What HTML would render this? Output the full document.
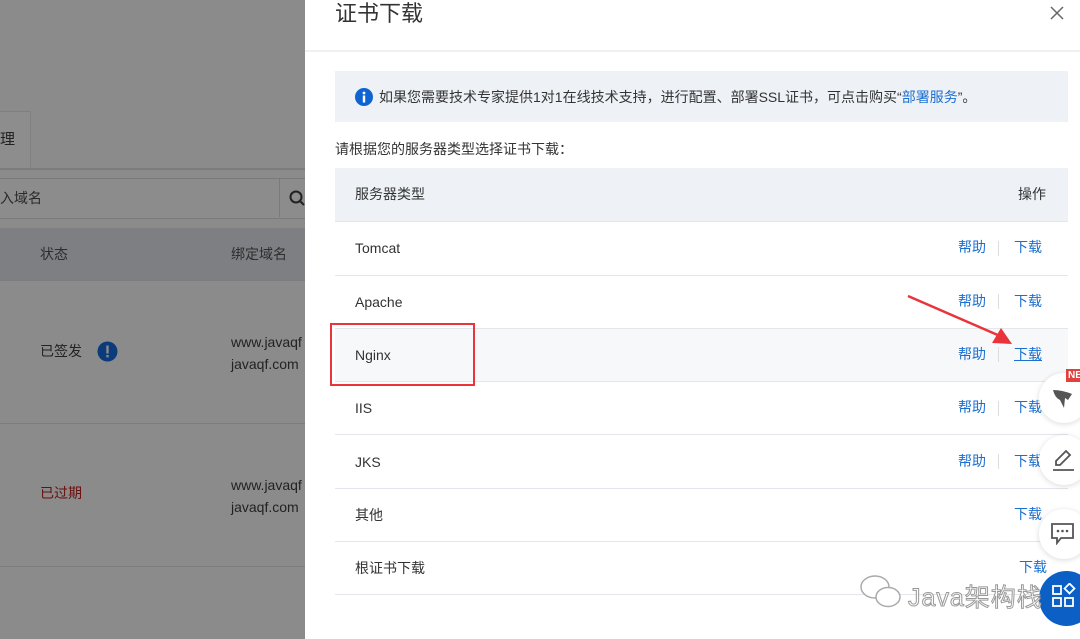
<!DOCTYPE html>
<html><head><meta charset="utf-8"><style>
body{margin:0;width:1080px;height:639px;overflow:hidden;position:relative;font-family:"Liberation Sans","Noto Sans CJK SC",sans-serif;background:#8b8b8b;}
.a{position:absolute}
.t{font-size:14px;color:#333;line-height:20px}
.lk{color:#1b6fd1;font-size:14px;line-height:20px}
</style></head><body>
<div class="a" style="left:0;top:111px;width:30px;height:57px;border:1px solid #7f7f7f;border-left:none;background:#8d8d8d"></div>
<div class="a t" style="left:0;top:130px;color:#222;font-size:15px">理</div>
<div class="a" style="left:0;top:168px;width:305px;height:2px;background:#7c7c7c"></div>
<div class="a" style="left:0;top:178px;width:305px;height:39px;border-top:1px solid #7a7a7a;border-bottom:1px solid #7a7a7a;background:#8c8c8c"></div>
<div class="a" style="left:279px;top:179px;width:1px;height:38px;background:#7a7a7a"></div>
<div class="a t" style="left:0;top:188px;color:#2a2a2a">入域名</div>
<svg class="a" style="left:289px;top:190px" width="16" height="16"><circle cx="7" cy="7" r="5.5" fill="none" stroke="#222" stroke-width="2"/><line x1="11" y1="11" x2="15" y2="15" stroke="#222" stroke-width="2"/></svg>
<div class="a" style="left:0;top:228px;width:305px;height:52px;background:#7e7f83"></div>
<div class="a t" style="left:40px;top:244px;color:#2e2e2e">状态</div>
<div class="a t" style="left:231px;top:244px;color:#2e2e2e">绑定域名</div>
<div class="a" style="left:0;top:280px;width:305px;height:1px;background:#7d7d7d"></div>
<div class="a t" style="left:40px;top:341px;color:#222">已签发</div>
<svg class="a" style="left:97px;top:341px" width="21" height="21"><circle cx="10.5" cy="10.5" r="10" fill="#0b3b7a"/><rect x="9.3" y="4.5" width="2.4" height="8" fill="#8b8b8b"/><rect x="9.3" y="14" width="2.4" height="2.4" fill="#8b8b8b"/></svg>
<div class="a t" style="left:231px;top:331px;color:#222;line-height:22px">www.javaqf<br>javaqf.com</div>
<div class="a" style="left:0;top:423px;width:305px;height:1px;background:#7d7d7d"></div>
<div class="a t" style="left:40px;top:483px;color:#6b0e0e">已过期</div>
<div class="a t" style="left:231px;top:474px;color:#222;line-height:22px">www.javaqf<br>javaqf.com</div>
<div class="a" style="left:0;top:566px;width:305px;height:1px;background:#7d7d7d"></div>

<div class="a" style="left:305px;top:0;width:775px;height:639px;background:#fff"></div>
<div class="a" style="left:335px;top:0;font-size:22px;color:#333;line-height:28px">证书下载</div>
<svg class="a" style="left:1050px;top:6px" width="14" height="14"><path d="M1 1L13 13M13 1L1 13" stroke="#666" stroke-width="1.5"/></svg>
<div class="a" style="left:305px;top:50px;width:775px;height:2px;background:#eef0f3"></div>
<div class="a" style="left:335px;top:71px;width:733px;height:51px;background:#eef2f7"></div>
<svg class="a" style="left:355px;top:88px" width="18" height="18"><circle cx="9" cy="9" r="9" fill="#1064d2"/><rect x="7.8" y="7.5" width="2.4" height="7" fill="#fff"/><circle cx="9" cy="5" r="1.4" fill="#fff"/></svg>
<div class="a t" style="left:379px;top:87px">如果您需要技术专家提供1对1在线技术支持，进行配置、部署SSL证书，可点击购买“<span style="color:#1b6fd1">部署服务</span>”。</div>
<div class="a t" style="left:335px;top:139px">请根据您的服务器类型选择证书下载：</div>
<div class="a" style="left:335px;top:168px;width:733px;height:53px;background:#eef2f7"></div>
<div class="a t" style="left:355px;top:184px">服务器类型</div>
<div class="a t" style="left:1018px;top:184px">操作</div>
<div class="a" style="left:335px;top:328px;width:733px;height:53px;background:#f7f8fa"></div>
<div class="a" style="left:335px;top:221px;width:733px;height:1px;background:#e3e6eb"></div>
<div class="a" style="left:335px;top:275px;width:733px;height:1px;background:#e3e6eb"></div>
<div class="a" style="left:335px;top:328px;width:733px;height:1px;background:#e3e6eb"></div>
<div class="a" style="left:335px;top:381px;width:733px;height:1px;background:#e3e6eb"></div>
<div class="a" style="left:335px;top:434px;width:733px;height:1px;background:#e3e6eb"></div>
<div class="a" style="left:335px;top:488px;width:733px;height:1px;background:#e3e6eb"></div>
<div class="a" style="left:335px;top:541px;width:733px;height:1px;background:#e3e6eb"></div>
<div class="a" style="left:335px;top:594px;width:733px;height:1px;background:#e3e6eb"></div>

<div class="a t" style="left:355px;top:238px">Tomcat</div>
<div class="a t" style="left:355px;top:292px">Apache</div>
<div class="a t" style="left:355px;top:345px">Nginx</div>
<div class="a t" style="left:355px;top:398px">IIS</div>
<div class="a t" style="left:355px;top:452px">JKS</div>
<div class="a t" style="left:355px;top:505px">其他</div>
<div class="a t" style="left:355px;top:558px">根证书下载</div>

<div class="a lk" style="left:958px;top:237px">帮助</div><div class="a" style="left:998px;top:241px;width:1px;height:15px;background:#ddd"></div><div class="a lk" style="left:1014px;top:237px">下载</div>
<div class="a lk" style="left:958px;top:291px">帮助</div><div class="a" style="left:998px;top:294px;width:1px;height:15px;background:#ddd"></div><div class="a lk" style="left:1014px;top:291px">下载</div>
<div class="a lk" style="left:958px;top:344px">帮助</div><div class="a" style="left:998px;top:347px;width:1px;height:15px;background:#ddd"></div><div class="a lk" style="left:1014px;top:344px;text-decoration:underline">下载</div>
<div class="a lk" style="left:958px;top:397px">帮助</div><div class="a" style="left:998px;top:401px;width:1px;height:15px;background:#ddd"></div><div class="a lk" style="left:1014px;top:397px">下载</div>
<div class="a lk" style="left:958px;top:451px">帮助</div><div class="a" style="left:998px;top:454px;width:1px;height:15px;background:#ddd"></div><div class="a lk" style="left:1014px;top:451px">下载</div>
<div class="a lk" style="left:1014px;top:504px">下载</div>
<div class="a lk" style="left:1019px;top:557px">下载</div>

<div class="a" style="left:330px;top:323px;width:141px;height:59px;border:2px solid #e8343a"></div>
<svg class="a" style="left:900px;top:290px" width="130" height="70"><line x1="8" y1="6" x2="100" y2="46" stroke="#e8343a" stroke-width="2.5"/><polygon points="112,54 92,53 101,38" fill="#e8343a"/></svg>

<div class="a" style="left:1039px;top:373px;width:50px;height:50px;border-radius:50%;background:#fff;box-shadow:0 1px 6px rgba(0,0,0,.15)"></div>
<svg class="a" style="left:1052px;top:386px" width="22" height="24"><path d="M1 4 Q10 4 20 8 L16 14 L13 12 L12 22 L8 14 Q3 12 1 4Z" fill="#555"/></svg>
<div class="a" style="left:1066px;top:369px;width:14px;height:13px;background:#e0413d;color:#fff;font-size:10px;font-weight:bold;line-height:13px;padding-left:2px">NE</div>
<div class="a" style="left:1039px;top:435px;width:50px;height:50px;border-radius:50%;background:#fff;box-shadow:0 1px 6px rgba(0,0,0,.15)"></div>
<svg class="a" style="left:1052px;top:448px" width="24" height="24"><path d="M4 17 L4 13 L14 3 L18 7 L8 17 Z" fill="none" stroke="#555" stroke-width="1.8"/><line x1="1" y1="22" x2="22" y2="22" stroke="#555" stroke-width="1.8"/></svg>
<div class="a" style="left:1039px;top:509px;width:50px;height:50px;border-radius:50%;background:#fff;box-shadow:0 1px 6px rgba(0,0,0,.15)"></div>
<svg class="a" style="left:1051px;top:523px" width="24" height="22"><path d="M1 1 H22 V15 H10 L6 20 V15 H1 Z" fill="none" stroke="#555" stroke-width="1.8"/><circle cx="7" cy="8" r="1.3" fill="#555"/><circle cx="11.5" cy="8" r="1.3" fill="#555"/><circle cx="16" cy="8" r="1.3" fill="#555"/></svg>
<div class="a" style="left:1039px;top:571px;width:55px;height:55px;border-radius:50%;background:#0c5fc5"></div>
<svg class="a" style="left:1052px;top:583px" width="28" height="28"><rect x="1" y="3" width="8" height="8" fill="none" stroke="#fff" stroke-width="1.8"/><rect x="1" y="15" width="8" height="8" fill="none" stroke="#fff" stroke-width="1.8"/><rect x="13" y="15" width="8" height="8" fill="none" stroke="#fff" stroke-width="1.8"/><rect x="14" y="2" width="7" height="7" transform="rotate(45 17.5 5.5)" fill="none" stroke="#fff" stroke-width="1.8"/></svg>
<svg class="a" style="left:858px;top:573px" width="46" height="38"><ellipse cx="17" cy="14" rx="14" ry="11" fill="#fff" stroke="#aaa" stroke-width="1.5"/><ellipse cx="30" cy="24" rx="12" ry="9.5" fill="#fff" stroke="#aaa" stroke-width="1.5"/></svg>
<div class="a" style="left:908px;top:578px;font-size:25px;color:#fff;-webkit-text-stroke:1px #999;letter-spacing:1px">Java架构栈</div>
</body></html>
